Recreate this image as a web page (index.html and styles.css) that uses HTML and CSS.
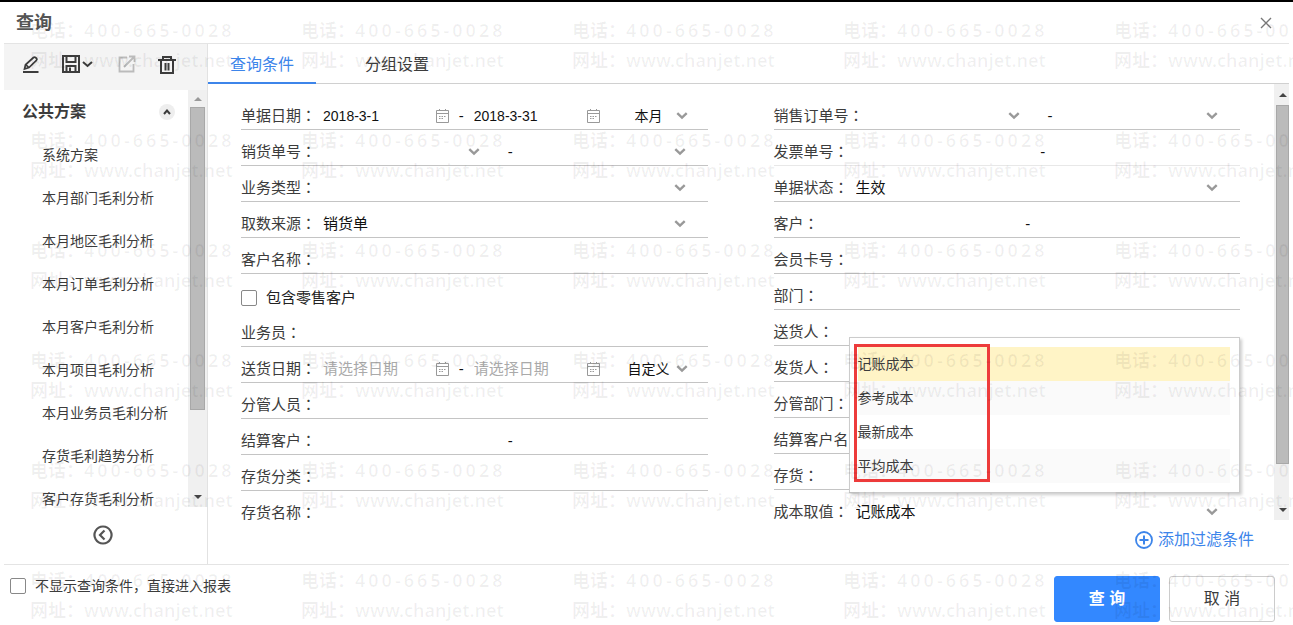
FILE: index.html
```html
<!DOCTYPE html>
<html lang="zh-CN">
<head>
<meta charset="utf-8">
<meta name="viewport" content="width=device-width, initial-scale=1">
<title>查询</title>
<link rel="stylesheet" href="styles.css">
</head>
<body>
<svg class="sprite" aria-hidden="true">
  <symbol id="i-down" viewBox="0 0 12 8"><path d="M1.300 1.200 6 5.700l4.700-4.500" fill="none" stroke="currentColor" stroke-width="2.400"/></symbol>
  <symbol id="i-cal" viewBox="0 0 13 14"><path d="M.5 1.500h12v12H.5zM.5 4.500h12M3.500 0v2M9.500 0v2" fill="none" stroke="currentColor"/><path d="M3 7.500h7M3 9.500h5" fill="none" stroke="currentColor" stroke-dasharray="1.500 1"/></symbol>
</svg>

<div class="dialog">
  <header class="header">
    <h1 class="title">查询</h1>
    <button class="icon-btn close" type="button" aria-label="关闭"><svg width="12" height="12" viewBox="0 0 12 12"><path d="m1 1 10 10M11 1 1 11" fill="none" stroke="currentColor" stroke-width="1.400"/></svg></button>
  </header>

  <div class="body">
    <aside class="sidebar">
      <div class="toolbar">
        <button class="icon-btn" type="button" aria-label="编辑"><svg width="18" height="20" viewBox="0 0 18 20"><path d="M1 18h15.500" stroke="currentColor" stroke-width="2"/><path d="m2.500 15 1-4.200 8-7.300q1-.9 2 0l1 .9q.9 1-.1 2L7 13.600zM4 10.800l2.800 2.700" fill="none" stroke="currentColor" stroke-width="1.700"/></svg></button>
        <button class="icon-btn save" type="button" aria-label="保存"><svg width="31" height="20" viewBox="0 0 31 20"><path d="M1 2h16v16H1zM4.500 2v6h9V2M4.500 18v-6h9v6" fill="none" stroke="currentColor" stroke-width="2"/><path d="M7 13.500h2V18H7z" fill="currentColor"/><path d="m21 8 4.500 4L30 8" fill="none" stroke="currentColor" stroke-width="2"/></svg></button>
        <button class="icon-btn muted" type="button" aria-label="分享"><svg width="18" height="18" viewBox="0 0 18 18"><path d="M9 2.500H1.500v14h14V9M6 12 16 2M11 1.500h5.500V7" fill="none" stroke="currentColor" stroke-width="1.800"/></svg></button>
        <button class="icon-btn" type="button" aria-label="删除"><svg width="18" height="19" viewBox="0 0 18 19"><path d="M0 5h18M5 5V2h8v3M3 5v13h12V5M7.500 8v7.500M10.500 8v7.500" fill="none" stroke="currentColor" stroke-width="2"/></svg></button>
      </div>
      <div class="plans">
        <nav class="plan-nav">
          <div class="plan-head">
            <h2>公共方案</h2>
            <button class="icon-btn fold" type="button" aria-label="收起"><svg width="8" height="6" viewBox="0 0 8 6"><path d="m1 5 3-3.500L7 5" fill="none" stroke="currentColor" stroke-width="2"/></svg></button>
          </div>
          <ul class="plan-list">
            <li><a href="#">系统方案</a></li>
            <li><a href="#">本月部门毛利分析</a></li>
            <li><a href="#">本月地区毛利分析</a></li>
            <li><a href="#">本月订单毛利分析</a></li>
            <li><a href="#">本月客户毛利分析</a></li>
            <li><a href="#">本月项目毛利分析</a></li>
            <li><a href="#">本月业务员毛利分析</a></li>
            <li><a href="#">存货毛利趋势分析</a></li>
            <li><a href="#">客户存货毛利分析</a></li>
          </ul>
        </nav>
        <div class="scrollbar side-scroll"><i class="tri up dim"></i><i class="thumb"></i><i class="space"></i><i class="tri down"></i></div>
      </div>
      <div class="collapse">
        <button class="icon-btn" type="button" aria-label="收起侧栏"><svg width="20" height="20" viewBox="0 0 20 20"><path d="M10 1.500a8.500 8.500 0 1 0 .01 0M11.500 5.500 7 10l4.500 4.500" fill="none" stroke="currentColor" stroke-width="2.200"/></svg></button>
      </div>
    </aside>

    <main class="main">
      <div class="tabs" role="tablist">
        <button class="tab active" type="button" role="tab" aria-selected="true">查询条件</button>
        <button class="tab" type="button" role="tab" aria-selected="false">分组设置</button>
      </div>

      <div class="form-area">
        <form class="form">
          <div class="col">
            <div class="row">
              <label for="d1">单据日期<span class="punct" lang="zh-TW">：</span></label>
              <span class="date"><input id="d1" type="text" value="2018-3-1"><svg class="cal"><use href="#i-cal"/></svg></span>
              <span class="sep narrow">-</span>
              <span class="date"><input type="text" value="2018-3-31" aria-label="结束日期"><svg class="cal"><use href="#i-cal"/></svg></span>
              <span class="pick period"><select aria-label="日期范围"><option>本月</option></select><svg class="arrow"><use href="#i-down"/></svg></span>
            </div>
            <div class="row">
              <label for="s1">销货单号<span class="punct" lang="zh-TW">：</span></label>
              <span class="pick from"><select id="s1"><option></option></select><svg class="arrow"><use href="#i-down"/></svg></span>
              <span class="sep wide">-</span>
              <span class="pick to"><select aria-label="销货单号止"><option></option></select><svg class="arrow"><use href="#i-down"/></svg></span>
            </div>
            <div class="row">
              <label for="s2">业务类型<span class="punct" lang="zh-TW">：</span></label>
              <span class="pick to"><select id="s2"><option></option></select><svg class="arrow"><use href="#i-down"/></svg></span>
            </div>
            <div class="row">
              <label for="s3">取数来源<span class="punct" lang="zh-TW">：</span></label>
              <span class="pick to"><select id="s3"><option>销货单</option></select><svg class="arrow"><use href="#i-down"/></svg></span>
            </div>
            <div class="row"><label for="t1">客户名称<span class="punct" lang="zh-TW">：</span></label><input id="t1" type="text"></div>
            <div class="row check-row"><input id="c1" class="check" type="checkbox"><label for="c1">包含零售客户</label></div>
            <div class="row"><label for="t2">业务员<span class="punct" lang="zh-TW">：</span></label><input id="t2" type="text"></div>
            <div class="row">
              <label for="d2">送货日期<span class="punct" lang="zh-TW">：</span></label>
              <span class="date"><input id="d2" type="text" placeholder="请选择日期"><svg class="cal"><use href="#i-cal"/></svg></span>
              <span class="sep narrow">-</span>
              <span class="date"><input type="text" placeholder="请选择日期" aria-label="送货结束日期"><svg class="cal"><use href="#i-cal"/></svg></span>
              <span class="pick period"><select aria-label="送货日期范围"><option>自定义</option></select><svg class="arrow"><use href="#i-down"/></svg></span>
            </div>
            <div class="row"><label for="t3">分管人员<span class="punct" lang="zh-TW">：</span></label><input id="t3" type="text"></div>
            <div class="row range"><label for="t4">结算客户<span class="punct" lang="zh-TW">：</span></label><input id="t4" type="text"><span class="sep">-</span><input type="text" aria-label="结算客户止"></div>
            <div class="row"><label for="t5">存货分类<span class="punct" lang="zh-TW">：</span></label><input id="t5" type="text"></div>
            <div class="row"><label for="t6">存货名称<span class="punct" lang="zh-TW">：</span></label><input id="t6" type="text"></div>
          </div>

          <div class="col">
            <div class="row">
              <label for="s4">销售订单号<span class="punct" lang="zh-TW">：</span></label>
              <span class="pick from"><select id="s4"><option></option></select><svg class="arrow"><use href="#i-down"/></svg></span>
              <span class="sep wide">-</span>
              <span class="pick to"><select aria-label="销售订单号止"><option></option></select><svg class="arrow"><use href="#i-down"/></svg></span>
            </div>
            <div class="row range faint"><label for="t7">发票单号<span class="punct" lang="zh-TW">：</span></label><input id="t7" type="text"><span class="sep">-</span><input type="text" aria-label="发票单号止"></div>
            <div class="row">
              <label for="s5">单据状态<span class="punct" lang="zh-TW">：</span></label>
              <span class="pick to"><select id="s5"><option>生效</option></select><svg class="arrow"><use href="#i-down"/></svg></span>
            </div>
            <div class="row range"><label for="t8">客户<span class="punct" lang="zh-TW">：</span></label><input id="t8" type="text"><span class="sep">-</span><input type="text" aria-label="客户止"></div>
            <div class="row"><label for="t9">会员卡号<span class="punct" lang="zh-TW">：</span></label><input id="t9" type="text"></div>
            <div class="row"><label for="t10">部门<span class="punct" lang="zh-TW">：</span></label><input id="t10" type="text"></div>
            <div class="row"><label for="t11">送货人<span class="punct" lang="zh-TW">：</span></label><input id="t11" type="text"></div>
            <div class="row"><label for="t12">发货人<span class="punct" lang="zh-TW">：</span></label><input id="t12" type="text"></div>
            <div class="row"><label for="t13">分管部门<span class="punct" lang="zh-TW">：</span></label><input id="t13" type="text"></div>
            <div class="row"><label for="t14">结算客户名</label><input id="t14" type="text"></div>
            <div class="row"><label for="t15">存货<span class="punct" lang="zh-TW">：</span></label><input id="t15" type="text"></div>
            <div class="row cost">
              <label for="s6">成本取值<span class="punct" lang="zh-TW">：</span></label>
              <span class="pick to"><select id="s6"><option>记账成本</option></select><svg class="arrow"><use href="#i-down"/></svg></span>
              <div class="popup">
                <ul role="listbox" aria-label="成本取值">
                  <li role="option" aria-selected="true">记账成本</li>
                  <li role="option">参考成本</li>
                  <li role="option">最新成本</li>
                  <li role="option">平均成本</li>
                </ul>
                <div class="mark"></div>
              </div>
            </div>
          </div>
        </form>
        <div class="scrollbar main-scroll"><i class="tri up"></i><i class="thumb"></i><i class="space"></i><i class="tri down"></i></div>
      </div>

      <div class="add-bar">
        <a class="add" href="#"><svg width="18" height="18" viewBox="0 0 18 18"><circle cx="9" cy="9" r="8" fill="none" stroke="currentColor" stroke-width="1.800"/><path d="M9 4.500v9M4.500 9h9" stroke="currentColor" stroke-width="2"/></svg>添加过滤条件</a>
      </div>
    </main>
  </div>

  <footer class="footer">
    <input id="skip" class="check" type="checkbox">
    <label for="skip">不显示查询条件，直接进入报表</label>
    <div class="actions">
      <button class="btn primary" type="button">查 询</button>
      <button class="btn" type="button">取 消</button>
    </div>
  </footer>
</div>

<div class="watermark" aria-hidden="true"></div>
<script src="watermark.js"></script>
</body>
</html>
```

FILE: watermark.js
```
const layer = document.querySelector('.watermark');
const tile = '<div class="tile"><p>电话：<span class="phone">400-665-0028</span></p><p>网址：www.chanjet.net</p></div>';
layer.innerHTML = tile.repeat(30);
```

FILE: styles.css
```css
* { box-sizing: border-box; }

body {
  margin: 0;
  height: 100vh;
  position: relative;
  overflow: hidden;
  background: #fff;
  color: #3c3c3c;
  font: 15px/20px "Liberation Sans", "Noto Sans CJK SC", sans-serif;
}

h1, h2, ul, p { margin: 0; padding: 0; }
ul { list-style: none; }
a { color: inherit; text-decoration: none; }
.sprite { position: absolute; width: 0; height: 0; }
.punct { font-family: "Noto Sans CJK TC", sans-serif; line-height: 1; }

button, input, select { font: inherit; color: inherit; }

.icon-btn {
  display: flex;
  align-items: center;
  justify-content: center;
  padding: 0;
  border: 0;
  background: none;
}

.dialog {
  height: 100%;
  display: flex;
  flex-direction: column;
  padding: 0 4px;
  border-top: 2px solid #000;
}

.header {
  flex: none;
  display: flex;
  align-items: center;
  justify-content: space-between;
  height: 42px;
  padding: 0 17px 0 12px;
  border-bottom: 1px solid #e4e4e4;
}
.title { font-size: 18px; line-height: 24px; color: #555; }
.close { color: #777; }

.body { flex: 1; min-height: 0; display: flex; }

.sidebar {
  flex: none;
  width: 204px;
  display: flex;
  flex-direction: column;
  border-right: 1px solid #e2e2e2;
}
.toolbar {
  flex: none;
  display: flex;
  align-items: center;
  gap: 22px;
  height: 46px;
  padding: 0 0 6px 18px;
  background: #f4f4f4;
}
.save { margin-right: 3px; }
.muted { color: #bbb; }
.plans { flex: 1; min-height: 0; display: flex; }
.plan-nav { flex: 1; overflow: hidden; }
.plan-head {
  display: flex;
  align-items: center;
  justify-content: space-between;
  height: 44px;
  padding: 0 13px 0 18px;
}
.plan-head h2 { font-size: 16px; line-height: 20px; }
.fold { width: 16px; height: 16px; border-radius: 50%; background: #eee; }
.plan-list { padding-left: 38px; font-size: 14px; line-height: 43px; white-space: nowrap; }
.collapse {
  flex: none;
  display: flex;
  justify-content: center;
  height: 57px;
  padding: 18px 6px 0 0;
  color: #555;
}
.collapse .icon-btn { height: 20px; }

.scrollbar {
  flex: none;
  display: flex;
  flex-direction: column;
  align-items: center;
  background: #f0f0f0;
}
.side-scroll { width: 19px; padding: 7px 0 8px; }
.main-scroll { width: 15px; padding: 9px 0 8px 2px; }
.thumb { align-self: stretch; border: 1px solid #a8a8a8; background: #bbb; }
.side-scroll .thumb { flex: 303; margin: 6px 2px 0; }
.side-scroll .space { flex: 85; }
.main-scroll .thumb { flex: 359; margin-top: 8px; }
.main-scroll .space { flex: 44; }
.tri { border: 4px solid transparent; }
.tri.up { border-top: 0; border-bottom-color: #444; }
.tri.down { border-bottom: 0; border-top-color: #444; }
.tri.dim { border-bottom-color: #999; }

.main { flex: 1; min-width: 0; display: flex; flex-direction: column; }
.tabs { flex: none; display: flex; gap: 27px; height: 40px; border-bottom: 1px solid #d0d0d0; }
.tab {
  height: 40px;
  padding: 4px 22px 0;
  border: 0;
  border-bottom: 2px solid transparent;
  background: none;
  font-size: 16px;
}
.tab.active { border-bottom-color: #3d85ea; color: #3d85ea; }

.form-area { flex: 1; min-height: 0; display: flex; overflow: hidden; }
.form {
  flex: 1;
  display: grid;
  grid-template-columns: 1fr 1fr;
  gap: 66px;
  align-items: start;
  padding: 10px 34px 0 33px;
}
.row {
  display: flex;
  align-items: center;
  height: 36px;
  padding-top: 8px;
  border-bottom: 1px solid #c4c4c4;
}
.row label { flex: none; margin-right: 7px; white-space: nowrap; }
.row > input[type="text"] { flex: 1; width: 0; min-width: 0; }
.faint { border-bottom-color: #e8e8e8; }
.range { padding-right: 10px; }
.check-row { height: 37px; padding-top: 10px; border-bottom: 0; color: #222; }

input[type="text"], select {
  padding: 0;
  border: 0;
  outline: 0;
  background: none;
  color: #111;
  font-size: 14px;
  line-height: 20px;
}
input::placeholder { color: #aaa; font-size: 15px; opacity: 1; }
select { appearance: none; width: 100%; font-size: 15px; }

.check {
  appearance: none;
  flex: none;
  width: 16px;
  height: 16px;
  margin: 0 9px 0 0;
  border: 1px solid #888;
  border-radius: 2px;
  background: #fff;
}

.date { flex: 1; min-width: 0; display: flex; align-items: center; }
.date input { flex: 1; width: 0; min-width: 0; }
.cal { flex: none; width: 13px; height: 14px; color: #999; }
.sep { flex: none; width: 6px; color: #111; text-align: center; }
.sep.narrow { width: 25px; }
.sep.wide { width: 60px; }
.pick { display: grid; align-items: center; min-width: 0; }
.pick > * { grid-area: 1 / 1; }
.arrow { justify-self: end; width: 12px; height: 8px; color: #999; pointer-events: none; }
.from { flex: 13; }
.to { flex: 12; margin-right: 22px; }
.period { flex: none; width: 60px; margin: 0 20px 0 28px; }
.period select { padding-right: 18px; font-size: 14px; text-align: center; text-align-last: center; }

.cost { position: relative; border-bottom: 0; }
.popup {
  position: absolute;
  left: 75px;
  right: 0;
  bottom: 33px;
  padding: 9px 9px 9px 8px;
  border: 1px solid #ccc;
  background: #fff;
  box-shadow: 2px 2px 3px rgba(0, 0, 0, .2);
  font-size: 14px;
}
.popup li { line-height: 34px; }
.popup li:nth-child(even) { background: #fafafa; }
.popup li[aria-selected] { background: #fff4c6; }
.mark {
  position: absolute;
  left: 4px;
  top: 6px;
  bottom: 10px;
  width: 136px;
  border: 3px solid #ed3b3b;
}

.add-bar { flex: none; display: flex; justify-content: flex-end; height: 44px; padding: 10px 35px 0 0; }
.add { display: flex; align-items: center; gap: 5px; height: 20px; color: #3d85ea; font-size: 16px; }

.footer {
  flex: none;
  display: flex;
  align-items: flex-start;
  height: 61px;
  padding: 11px 14px 0 6px;
  border-top: 1px solid #e4e4e4;
  font-size: 14px;
}
.footer .check { margin-top: 2px; }
.actions { display: flex; gap: 9px; margin-left: auto; }
.btn {
  width: 106px;
  height: 46px;
  border: 1px solid #ccc;
  border-radius: 3px;
  background: #fff;
  font-size: 16px;
}
.btn.primary { border-color: #3388ff; background: #3388ff; color: #fff; font-weight: bold; }

.watermark {
  position: absolute;
  inset: 0;
  display: grid;
  grid-template-columns: repeat(5, 271px);
  grid-auto-rows: 110px;
  padding: 15px 0 0 30px;
  overflow: hidden;
  pointer-events: none;
  color: rgba(0, 0, 0, .06);
  font: 600 18px/30px "Noto Sans", "Noto Sans CJK SC", sans-serif;
  white-space: nowrap;
}
.phone { letter-spacing: 3px; }
```
